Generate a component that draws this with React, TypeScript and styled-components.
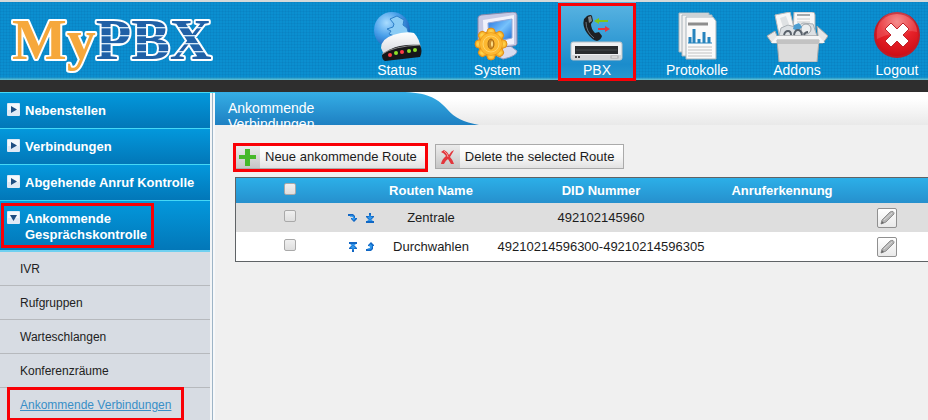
import React from "react";
import styled, { createGlobalStyle, css } from "styled-components";

const GlobalStyle = createGlobalStyle`
  *, *::before, *::after { box-sizing: border-box; }
  body {
    margin: 0;
    background: #f0f0f0;
    color: #1c1c1c;
    font-family: "Liberation Sans", Arial, sans-serif;
    font-size: 13px;
  }
  button, input { font: inherit; }
`;

const marker = css`
  position: relative;
  &::after {
    content: "";
    position: absolute;
    border: 3px solid #f90006;
    pointer-events: none;
  }
`;

const Page = styled.div`
  display: flex;
  flex-direction: column;
  min-height: 100vh;
`;

const Header = styled.header`
  display: flex;
  justify-content: space-between;
  height: 92px;
  border-top: 2px solid #d5d9da;
  border-bottom: 12px solid #2e2e2e;
  background:
    linear-gradient(to top, rgba(128, 208, 208, 0.8), rgba(80, 180, 210, 0) 3px),
    repeating-linear-gradient(to right, rgba(0, 60, 120, 0.08) 0 1px, transparent 1px 3px),
    repeating-linear-gradient(to bottom, rgba(0, 60, 120, 0.08) 0 1px, transparent 1px 3px),
    #0b8fd0;
`;

const Logo = styled.a`
  display: block;
  padding-left: 8px;
  svg { display: block; }
`;

const Nav = styled.nav`
  display: flex;
  gap: 38px;
`;

const NavItem = styled.a<{ $active?: boolean }>`
  display: flex;
  flex-direction: column;
  align-items: center;
  width: 62px;
  padding-top: 10px;
  color: #fff;
  font-size: 14px;
  line-height: 16px;
  text-decoration: none;
  white-space: nowrap;
  svg { display: block; flex: none; }
  ${(p) =>
    p.$active &&
    css`
      ${marker}
      width: 78px;
      margin: 0 -8px;
      background: linear-gradient(#5ab4e2, #1b8ccc 80%, #2a99cf);
      &::after { inset: 1px 0 -1px; }
    `}
`;

const Body = styled.div`
  display: flex;
  flex: 1;
`;

const Sidebar = styled.aside`
  flex: 0 0 215px;
  padding-right: 5px;
  border-top: 1px solid #45d8f5;
  background:
    linear-gradient(to right, #f3f5f7 2px, #9db4c6 2px 3px, #f6f8fa 3px) right / 5px 100% no-repeat,
    #d7dce3;
`;

const Group = styled.button<{ $open?: boolean }>`
  display: flex;
  align-items: flex-start;
  gap: 5px;
  width: 100%;
  padding: 10px 7px 9px;
  border: 0;
  border-bottom: ${(p) => (p.$open ? "2px solid #6fd0f0" : "1px solid #45d8f5")};
  background: linear-gradient(#0398dc, #0277b8);
  color: #fff;
  font-weight: bold;
  line-height: 16px;
  text-align: left;
  svg { display: block; flex: none; }
  ${(p) =>
    p.$open &&
    css`
      ${marker}
      padding-bottom: 7px;
      &::after { inset: 2px 56px 2px 1px; }
    `}
`;

const SubMenu = styled.ul`
  margin: 0;
  padding: 0;
  list-style: none;
`;

const SubItem = styled.li<{ $active?: boolean }>`
  padding: 10px 20px 8px;
  border-bottom: 1px solid #b6b9bd;
  font-size: 12px;
  line-height: 15px;
  &:last-child { border-bottom: 0; padding-bottom: 7px; }
  ${(p) =>
    p.$active &&
    css`
      ${marker}
      &::after { inset: -1px 26px -1px 7px; }
    `}
`;

const SubLink = styled.a<{ $active?: boolean }>`
  color: ${(p) => (p.$active ? "#398fc7" : "#222")};
  text-decoration: ${(p) => (p.$active ? "underline" : "none")};
`;

const Main = styled.main`
  flex: 1;
  min-width: 0;
`;

const TitleBar = styled.div`
  display: flex;
  height: 33px;
  background: linear-gradient(#fff 20%, #e9e9e9);
  svg { display: block; flex: none; }
`;

const Title = styled.h1`
  width: 190px;
  height: 35px;
  margin: 0;
  padding: 8px 70px 0 13px;
  overflow: hidden;
  background: linear-gradient(#35aee6, #1e80c2) top / 100% 33px no-repeat;
  color: #fff;
  font-size: 14px;
  font-weight: normal;
  line-height: 16px;
`;

const Content = styled.div`
  padding: 19px 0 0 20px;
`;

const Toolbar = styled.div`
  display: flex;
  gap: 9px;
  margin-bottom: 8px;
`;

const ToolButton = styled.button<{ $marked?: boolean }>`
  display: flex;
  align-items: stretch;
  height: 25px;
  padding: 0 9px 0 0;
  border: 1px solid #aaa;
  background: linear-gradient(#fff, #f7f7f7 50%, #e2e2e2);
  color: #1c1c1c;
  line-height: 23px;
  white-space: nowrap;
  ${(p) =>
    p.$marked &&
    css`
      ${marker}
      padding-right: 8px;
      &::after { inset: -2px -3px -4px; }
    `}
`;

const ToolIcon = styled.span`
  display: grid;
  place-items: center;
  width: 24px;
  margin-right: 5px;
  background: linear-gradient(#ececec, #c6c6c6);
`;

const Table = styled.table`
  width: 100%;
  table-layout: fixed;
  border: 1px solid #5f6366;
  border-right: 0;
  border-collapse: separate;
  border-spacing: 0;
  background: #fff;
  text-align: center;
`;

const Col = styled.col<{ $width?: number }>`
  width: ${(p) => (p.$width ? `${p.$width}px` : "auto")};
`;

const HeadRow = styled.tr`
  height: 25px;
  background: linear-gradient(#2cafe8, #2690cd);
  color: #fff;
`;

const Row = styled.tr<{ $shaded?: boolean }>`
  height: 29px;
  background: ${(p) => (p.$shaded ? "#dedede" : "#fff")};
`;

const Cell = styled.td`
  padding: 0;
  line-height: 16px;
  white-space: nowrap;
`;

const HeadCell = styled(Cell).attrs({ as: "th" })``;

const Tick = styled.input`
  appearance: none;
  display: block;
  width: 12px;
  height: 12px;
  margin: 0 auto 4px;
  border: 1px solid #a9a9a9;
  border-radius: 2px;
  background: linear-gradient(#f0f0f0, #dedede);
  &:checked { background: #2690cd; }
`;

const IconButton = styled.button`
  padding: 0;
  border: 0;
  background: none;
  vertical-align: middle;
  svg { display: block; }
`;

const Moves = styled.div`
  display: flex;
  justify-content: center;
  gap: 7px;
`;

const EditButton = styled(IconButton)`
  width: 20px;
  height: 20px;
  border: 1px solid #909090;
  border-radius: 2px;
  background: linear-gradient(#fff, #e9e9e9);
`;

const LogoArt = () => (
  <svg width="212" height="78" viewBox="0 0 212 78" role="img" aria-label="MyPBX">
    <defs>
      <pattern id="stripes" width="8" height="8" y="1" patternUnits="userSpaceOnUse">
        <rect width="8" height="8" fill="#2060a6" />
        <rect width="8" height="1" fill="#d5e6f4" />
        <rect y="1" width="8" height="1" fill="#5b93c8" />
      </pattern>
    </defs>
    <g
      fontFamily="Liberation Serif, Times New Roman, serif"
      fontWeight="bold"
      fontSize="58"
      stroke="#fff"
      strokeWidth="4"
      strokeLinejoin="round"
      paintOrder="stroke"
    >
      <text x="4" y="57">
        <tspan fill="#f6a83c">My</tspan>
        <tspan fill="url(#stripes)">PBX</tspan>
      </text>
    </g>
  </svg>
);

const Icon = ({ children }: { children: React.ReactNode }) => (
  <svg width="62" height="50" viewBox="0 0 62 50" aria-hidden="true">
    {children}
  </svg>
);

const StatusIcon = () => (
  <Icon>
    <defs>
      <radialGradient id="globe" cx=".35" cy=".3" r=".75">
        <stop stopColor="#a9dcff" />
        <stop offset=".5" stopColor="#489fe9" />
        <stop offset="1" stopColor="#1558b2" />
      </radialGradient>
      <linearGradient id="shell" x2="0" y2="1">
        <stop stopColor="#fff" />
        <stop offset="1" stopColor="#d0d3da" />
      </linearGradient>
    </defs>
    <circle cx="26" cy="18" r="18" fill="url(#globe)" />
    <path d="M24 7l7-3 7 4-1 5 4 3 2 7-9-1-3 3-8-3 2-3-4-2 6-2 1-3z" fill="#8bccf5" stroke="#2e7fc8" />
    <path d="M15 36Q15 27 27 23T48 21Q54 27 55 38L51 42 19 45Z" fill="url(#shell)" />
    <path d="M16 43Q24 36 34 34T54 33Q57 39 54 45L19 49Q16 48 16 43Z" fill="#171719" />
    <path d="M16 42Q28 34 54 33" fill="none" stroke="#888" />
    <g fill="#ff3b45"><circle cx="24" cy="43" r="2" /><circle cx="36" cy="40" r="2" /></g>
    <g fill="#8ee02a"><circle cx="30" cy="41" r="2" /><circle cx="43" cy="39" r="2" /><circle cx="49" cy="38" r="2" /></g>
  </Icon>
);

const teeth = [0, 45, 90, 135, 180, 225, 270, 315];

const SystemIcon = () => (
  <Icon>
    <defs>
      <linearGradient id="screen" x2="1" y2="1">
        <stop stopColor="#2774df" />
        <stop offset=".5" stopColor="#77c2fb" />
        <stop offset="1" stopColor="#1765d2" />
      </linearGradient>
      <radialGradient id="gear">
        <stop stopColor="#ffdc56" />
        <stop offset="1" stopColor="#f7a116" />
      </radialGradient>
    </defs>
    <path d="M33 37l10-4 8 6q0 5-14 8l-6-3z" fill="#d9dbef" stroke="#9ba0c2" />
    <path d="M12 6Q12 4 15 3L47 0Q51 0 51 3V32Q50 34 47 34L17 37 12 33Z" fill="#c6c9e4" stroke="#8589ad" />
    <path d="M17 8L48 3V32L18 36Z" fill="#f1f1fb" />
    <path d="M22 11L46 7V26L23 31Z" fill="url(#screen)" stroke="#8fa6d6" />
    <g fill="url(#gear)" stroke="#e0901a" strokeWidth="1">
      {teeth.map((a) => (
        <path key={a} d="M20 22l2-5q3-2 6 0l2 5z" transform={`rotate(${a} 25 32)`} />
      ))}
      <circle cx="25" cy="32" r="11" />
    </g>
    <circle cx="25" cy="32" r="11" fill="#fdb831" />
    <circle cx="25" cy="32" r="8" fill="none" stroke="#ffd468" />
    <ellipse cx="25" cy="32" rx="3" ry="5" fill="#c98a2a" stroke="#a96a12" />
    <ellipse cx="26" cy="32" rx="1" ry="3" fill="#ffe28a" />
  </Icon>
);

const PbxIcon = () => (
  <Icon>
    <path d="M21 4q4-2 5 0l1 5-2 3q0 5 4 9l4-1 3 4q-1 4-5 5-5-1-10-8t-3-14z" fill="#1d2024" />
    <path d="M22 5l3-1 1 5-3 2z" fill="#81878c" />
    <path d="M20 10q0 10 8 16" fill="none" stroke="#69737d" />
    <path d="M28 9l5-3v2h9v2h-9v2z" fill="#7fc41b" />
    <path d="M44 17l-5-3v2h-7v2h7v2z" fill="#e8343f" />
    <rect x="5" y="30" width="51" height="18" rx="2" fill="#f0f1f2" stroke="#b9c0c5" />
    <rect x="6" y="43" width="49" height="4" fill="#d6d8da" />
    <rect x="9" y="34" width="43" height="8" fill="#292c2e" />
    <path d="M10 38h41" stroke="#474a4c" />
    <path d="M9 45h2m1 0h2" stroke="#444" strokeWidth="2" />
    <rect x="45" y="44" width="7" height="2" fill="#fff" stroke="#aaa" />
  </Icon>
);

const LogsIcon = () => (
  <Icon>
    <g fill="#f1f1f1" stroke="#a9b4bb">
      <path d="M13 1H43V40H13Z" />
      <path d="M16 3H46V44H16Z" />
      <path d="M20 5H47L50 9V47H20Z" fill="#fafafa" />
    </g>
    <path d="M22 12H42" stroke="#8d8d8d" strokeWidth="3" />
    <path d="M24 31V25M28 31V17M33 31V27M38 31V20M43 31V25" stroke="#2783bd" strokeWidth="3" />
    <path d="M22 31H46" stroke="#2783bd" />
    <path d="M22 35H46M22 38H46M22 41H46M22 44H46" stroke="#c2c2c2" />
  </Icon>
);

const AddonsIcon = () => (
  <Icon>
    <path d="M9 3L24 0 30 24 14 27Z" fill="#f7f7f7" stroke="#bbb" />
    <path d="M14 6l6-2 3 8-6 3z" fill="#dfe2e4" />
    <path d="M28 0H46Q49 0 49 3V24H27Z" fill="#f7f7f7" stroke="#b0b2b4" />
    <path d="M31 3H44" stroke="#a4a8ab" strokeWidth="2" />
    <path d="M31 7H44M31 10H44" stroke="#ccc" />
    <path d="M13 24L15 16 22 13 29 15 37 11 47 12 51 24Z" fill="#dde1e4" stroke="#a9afb4" />
    <circle cx="40" cy="17" r="5" fill="#eceeef" stroke="#9ba0a5" />
    <path d="M28 13l5-2 3 4-4 4-5-2z" fill="#4d9ed1" />
    <path d="M9 19L11 24H52L51 14 62 24 57 31H6L1 24Z" fill="#e7e7e7" stroke="#a6a6a6" />
    <path d="M18 23q1-4 4-4t3 4m3 0q1-5 4-5t4 5m2 0q1-3 4-3" fill="none" stroke="#59616a" strokeWidth="2" />
    <path d="M11 24H53L59 31H5Z" fill="#f5f5f5" />
    <path d="M11 28H53L51 50H13Z" fill="#dcdcdc" stroke="#aaa" />
    <path d="M11 28H53V32H12z" fill="#c2c2c2" />
  </Icon>
);

const LogoutIcon = () => (
  <Icon>
    <defs>
      <radialGradient id="red" cx=".5" cy=".2" r=".8">
        <stop stopColor="#f37a7a" />
        <stop offset=".5" stopColor="#e8222a" />
        <stop offset="1" stopColor="#cc0c14" />
      </radialGradient>
    </defs>
    <circle cx="31" cy="23" r="22" fill="url(#red)" stroke="#c11b25" strokeWidth="2" />
    <path d="M11 20A20 20 0 0 1 51 20Q35 16 11 27Z" fill="#fff" opacity=".15" />
    <path
      d="M25 11L31 17 37 11 43 17 37 23 43 29 37 35 31 29 25 35 19 29 25 23 19 17Z"
      fill="#fff"
      stroke="#c0242c"
      strokeWidth="1"
      strokeLinejoin="round"
    />
  </Icon>
);

const GroupIcon = ({ open }: { open?: boolean }) => (
  <svg width="13" height="13" viewBox="0 0 13 13" aria-hidden="true">
    <rect width="13" height="13" rx="1" fill="#dfe9f5" />
    <rect x="1" y="1" width="11" height="6" fill="#f4f8fc" />
    <path d={open ? "M3 4H10L6.5 10Z" : "M4 3V10L10 6.5Z"} fill="#1e4e82" />
  </svg>
);

const PlusIcon = () => (
  <svg width="18" height="18" viewBox="0 0 18 18" aria-hidden="true">
    <path d="M6 1H11V7H17V11H11V18H6V11H0V7H6Z" fill="#46b82a" />
  </svg>
);

const DeleteIcon = () => (
  <svg width="16" height="16" viewBox="0 0 16 16" aria-hidden="true">
    <path d="M1 3L4 1Q8 3 9 6 11 2 14 1L13 3 10 8Q13 11 14 15L11 15 8 10Q5 12 4 15L1 15Q2 10 6 7 4 4 1 3Z" fill="#e2363c" />
    <path d="M4 2Q8 5 8 8" fill="none" stroke="#f49494" />
  </svg>
);

const movePaths = {
  down: "M0 1H5L7 3V5H9V6L6 9 3 6V5H5V4L4 3H0Z",
  bottom: "M4 0H6V3H9V4L5 8 1 4V3H4ZM1 8H9V10H1Z",
  top: "M1 0H9V2H1ZM5 2L9 6V7H6V10H4V7H1V6Z",
  up: "M6 0L9 3V4H8V7L6 9H1V7H4L5 6V4H3V3Z",
};

const MoveIcon = ({ kind }: { kind: keyof typeof movePaths }) => (
  <svg width="10" height="10" viewBox="0 0 10 10" aria-hidden="true">
    <path d={movePaths[kind]} fill="#1167c4" />
    <path d={movePaths[kind]} fill="#2f97ec" transform="translate(2 2) scale(.6)" />
  </svg>
);

const PencilIcon = () => (
  <svg width="18" height="18" viewBox="0 0 18 18" aria-hidden="true">
    <path d="M3 15L4 11 12 3Q16 1 16 5L8 13Z" fill="#b4b4b4" stroke="#8f8f8f" />
    <path d="M6 11L14 4" stroke="#d9d9d9" />
    <path d="M3 15L4 12 6 14Z" fill="#666" />
  </svg>
);

const navItems = [
  { label: "Status", Art: StatusIcon },
  { label: "System", Art: SystemIcon },
  { label: "PBX", Art: PbxIcon, active: true },
  { label: "Protokolle", Art: LogsIcon },
  { label: "Addons", Art: AddonsIcon },
  { label: "Logout", Art: LogoutIcon },
];

const groups = ["Nebenstellen", "Verbindungen", "Abgehende Anruf Kontrolle"];
const subItems = ["IVR", "Rufgruppen", "Warteschlangen", "Konferenzräume", "Ankommende Verbindungen"];

type Move = { kind: keyof typeof movePaths; label: string };
const routes: { name: string; did: string; moves: Move[] }[] = [
  {
    name: "Zentrale",
    did: "492102145960",
    moves: [{ kind: "down", label: "Move down" }, { kind: "bottom", label: "Move to bottom" }],
  },
  {
    name: "Durchwahlen",
    did: "49210214596300-49210214596305",
    moves: [{ kind: "top", label: "Move to top" }, { kind: "up", label: "Move up" }],
  },
];

export default function App() {
  return (
    <Page>
      <GlobalStyle />
      <Header>
        <Logo href="#"><LogoArt /></Logo>
        <Nav>
          {navItems.map(({ label, Art, active }) => (
            <NavItem key={label} href="#" $active={active}>
              <Art />
              {label}
            </NavItem>
          ))}
        </Nav>
      </Header>
      <Body>
        <Sidebar>
          {groups.map((g) => (
            <Group key={g} type="button" aria-expanded={false}>
              <GroupIcon />
              {g}
            </Group>
          ))}
          <Group type="button" aria-expanded $open>
            <GroupIcon open />
            <span>Ankommende<br />Gesprächskontrolle</span>
          </Group>
          <SubMenu>
            {subItems.map((s, i) => {
              const active = i === subItems.length - 1;
              return (
                <SubItem key={s} $active={active}>
                  <SubLink href="#" $active={active}>{s}</SubLink>
                </SubItem>
              );
            })}
          </SubMenu>
        </Sidebar>
        <Main>
          <TitleBar>
            <Title>Ankommende Verbindungen</Title>
            <svg width="76" height="33" viewBox="0 0 76 33" aria-hidden="true">
              <defs>
                <linearGradient id="tab" x2="0" y2="1">
                  <stop stopColor="#35aee6" />
                  <stop offset="1" stopColor="#1e80c2" />
                </linearGradient>
              </defs>
              <path d="M0 0C25 1 34 8 42 17S58 30 74 33H0Z" fill="url(#tab)" />
            </svg>
          </TitleBar>
          <Content>
            <Toolbar>
              <ToolButton type="button" $marked>
                <ToolIcon><PlusIcon /></ToolIcon>
                Neue ankommende Route
              </ToolButton>
              <ToolButton type="button">
                <ToolIcon><DeleteIcon /></ToolIcon>
                Delete the selected Route
              </ToolButton>
            </Toolbar>
            <Table>
              <colgroup>
                <Col $width={107} />
                <Col $width={36} />
                <Col $width={104} />
                <Col $width={236} />
                <Col $width={126} />
                <Col $width={84} />
                <Col />
              </colgroup>
              <thead>
                <HeadRow>
                  <HeadCell><Tick type="checkbox" aria-label="Select all routes" /></HeadCell>
                  <Cell />
                  <HeadCell>Routen Name</HeadCell>
                  <HeadCell>DID Nummer</HeadCell>
                  <HeadCell>Anruferkennung</HeadCell>
                  <Cell />
                  <Cell />
                </HeadRow>
              </thead>
              <tbody>
                {routes.map((r, i) => (
                  <Row key={r.name} $shaded={i % 2 === 0}>
                    <Cell><Tick type="checkbox" aria-label={`Select ${r.name}`} /></Cell>
                    <Cell>
                      <Moves>
                        {r.moves.map((m) => (
                          <IconButton key={m.kind} type="button" aria-label={m.label}>
                            <MoveIcon kind={m.kind} />
                          </IconButton>
                        ))}
                      </Moves>
                    </Cell>
                    <Cell>{r.name}</Cell>
                    <Cell>{r.did}</Cell>
                    <Cell />
                    <Cell>
                      <EditButton type="button" aria-label={`Edit ${r.name}`}><PencilIcon /></EditButton>
                    </Cell>
                    <Cell />
                  </Row>
                ))}
              </tbody>
            </Table>
          </Content>
        </Main>
      </Body>
    </Page>
  );
}
